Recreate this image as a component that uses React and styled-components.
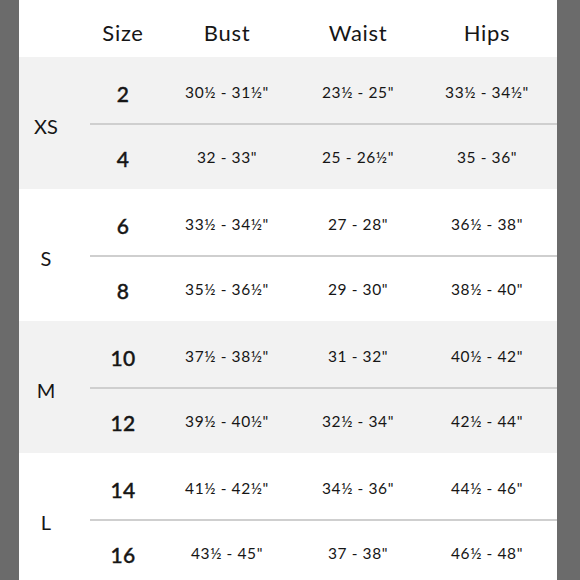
import React from "react";
import styled, { createGlobalStyle } from "styled-components";

const Global = createGlobalStyle`
  html, body { margin: 0; padding: 0; background: #6b6b6b; }
  body { font-family: Lato, "Open Sans", sans-serif; color: #161616; }
`;

const COLS = "66px 142px 120px 138px";

const Page = styled.div`
  margin: 0 23px 0 19px;
  height: 580px;
  overflow: hidden;
  background: #ffffff;
`;

const Header = styled.div`
  display: grid;
  grid-template-columns: 71px ${COLS};
  height: 57px;
  align-items: center;
  background: #ffffff;
`;

const HeadCell = styled.div`
  text-align: center;
  font-size: 22px;
  letter-spacing: 0.7px;
  padding-top: 8px;
`;

const Group = styled.div`
  display: grid;
  grid-template-columns: 71px 1fr;
  background: ${(p) => (p.$shade ? "#f2f2f2" : "#ffffff")};
`;

const GroupLabel = styled.div`
  display: flex;
  align-items: center;
  justify-content: center;
  font-size: 20px;
  padding-top: 5px;
  padding-right: 17px;
`;

const Rows = styled.div`
  display: flex;
  flex-direction: column;
`;

const Row = styled.div`
  display: grid;
  grid-template-columns: ${COLS};
  align-items: center;
  height: 66px;
  box-sizing: border-box;
  border-top: ${(p) => (p.$divided ? "2px solid #cfcfcf" : "none")};
`;

const SizeNum = styled.div`
  text-align: center;
  font-size: 21px;
  font-weight: 500;
  letter-spacing: 0.3px;
  padding-top: ${(p) => (p.$divided ? "2px" : "6px")};
  -webkit-text-stroke: 0.4px #161616;
`;

const Measure = styled.div`
  text-align: center;
  font-size: 15.5px;
  letter-spacing: 0.6px;
  padding-top: ${(p) => (p.$divided ? "0px" : "4px")};
`;

const data = [
  { label: "XS", rows: [["2", "30½ - 31½\"", "23½ - 25\"", "33½ - 34½\""], ["4", "32 - 33\"", "25 - 26½\"", "35 - 36\""]] },
  { label: "S", rows: [["6", "33½ - 34½\"", "27 - 28\"", "36½ - 38\""], ["8", "35½ - 36½\"", "29 - 30\"", "38½ - 40\""]] },
  { label: "M", rows: [["10", "37½ - 38½\"", "31 - 32\"", "40½ - 42\""], ["12", "39½ - 40½\"", "32½ - 34\"", "42½ - 44\""]] },
  { label: "L", rows: [["14", "41½ - 42½\"", "34½ - 36\"", "44½ - 46\""], ["16", "43½ - 45\"", "37 - 38\"", "46½ - 48\""]] },
];

export default function App() {
  return (
    <>
      <Global />
      <Page>
        <Header>
          <div />
          <HeadCell>Size</HeadCell>
          <HeadCell>Bust</HeadCell>
          <HeadCell>Waist</HeadCell>
          <HeadCell>Hips</HeadCell>
        </Header>
        {data.map((g, gi) => (
          <Group key={g.label} $shade={gi % 2 === 0}>
            <GroupLabel>{g.label}</GroupLabel>
            <Rows>
              {g.rows.map((r, ri) => (
                <Row key={r[0]} $divided={ri > 0}>
                  <SizeNum $divided={ri > 0}>{r[0]}</SizeNum>
                  <Measure $divided={ri > 0}>{r[1]}</Measure>
                  <Measure $divided={ri > 0}>{r[2]}</Measure>
                  <Measure $divided={ri > 0}>{r[3]}</Measure>
                </Row>
              ))}
            </Rows>
          </Group>
        ))}
      </Page>
    </>
  );
}
